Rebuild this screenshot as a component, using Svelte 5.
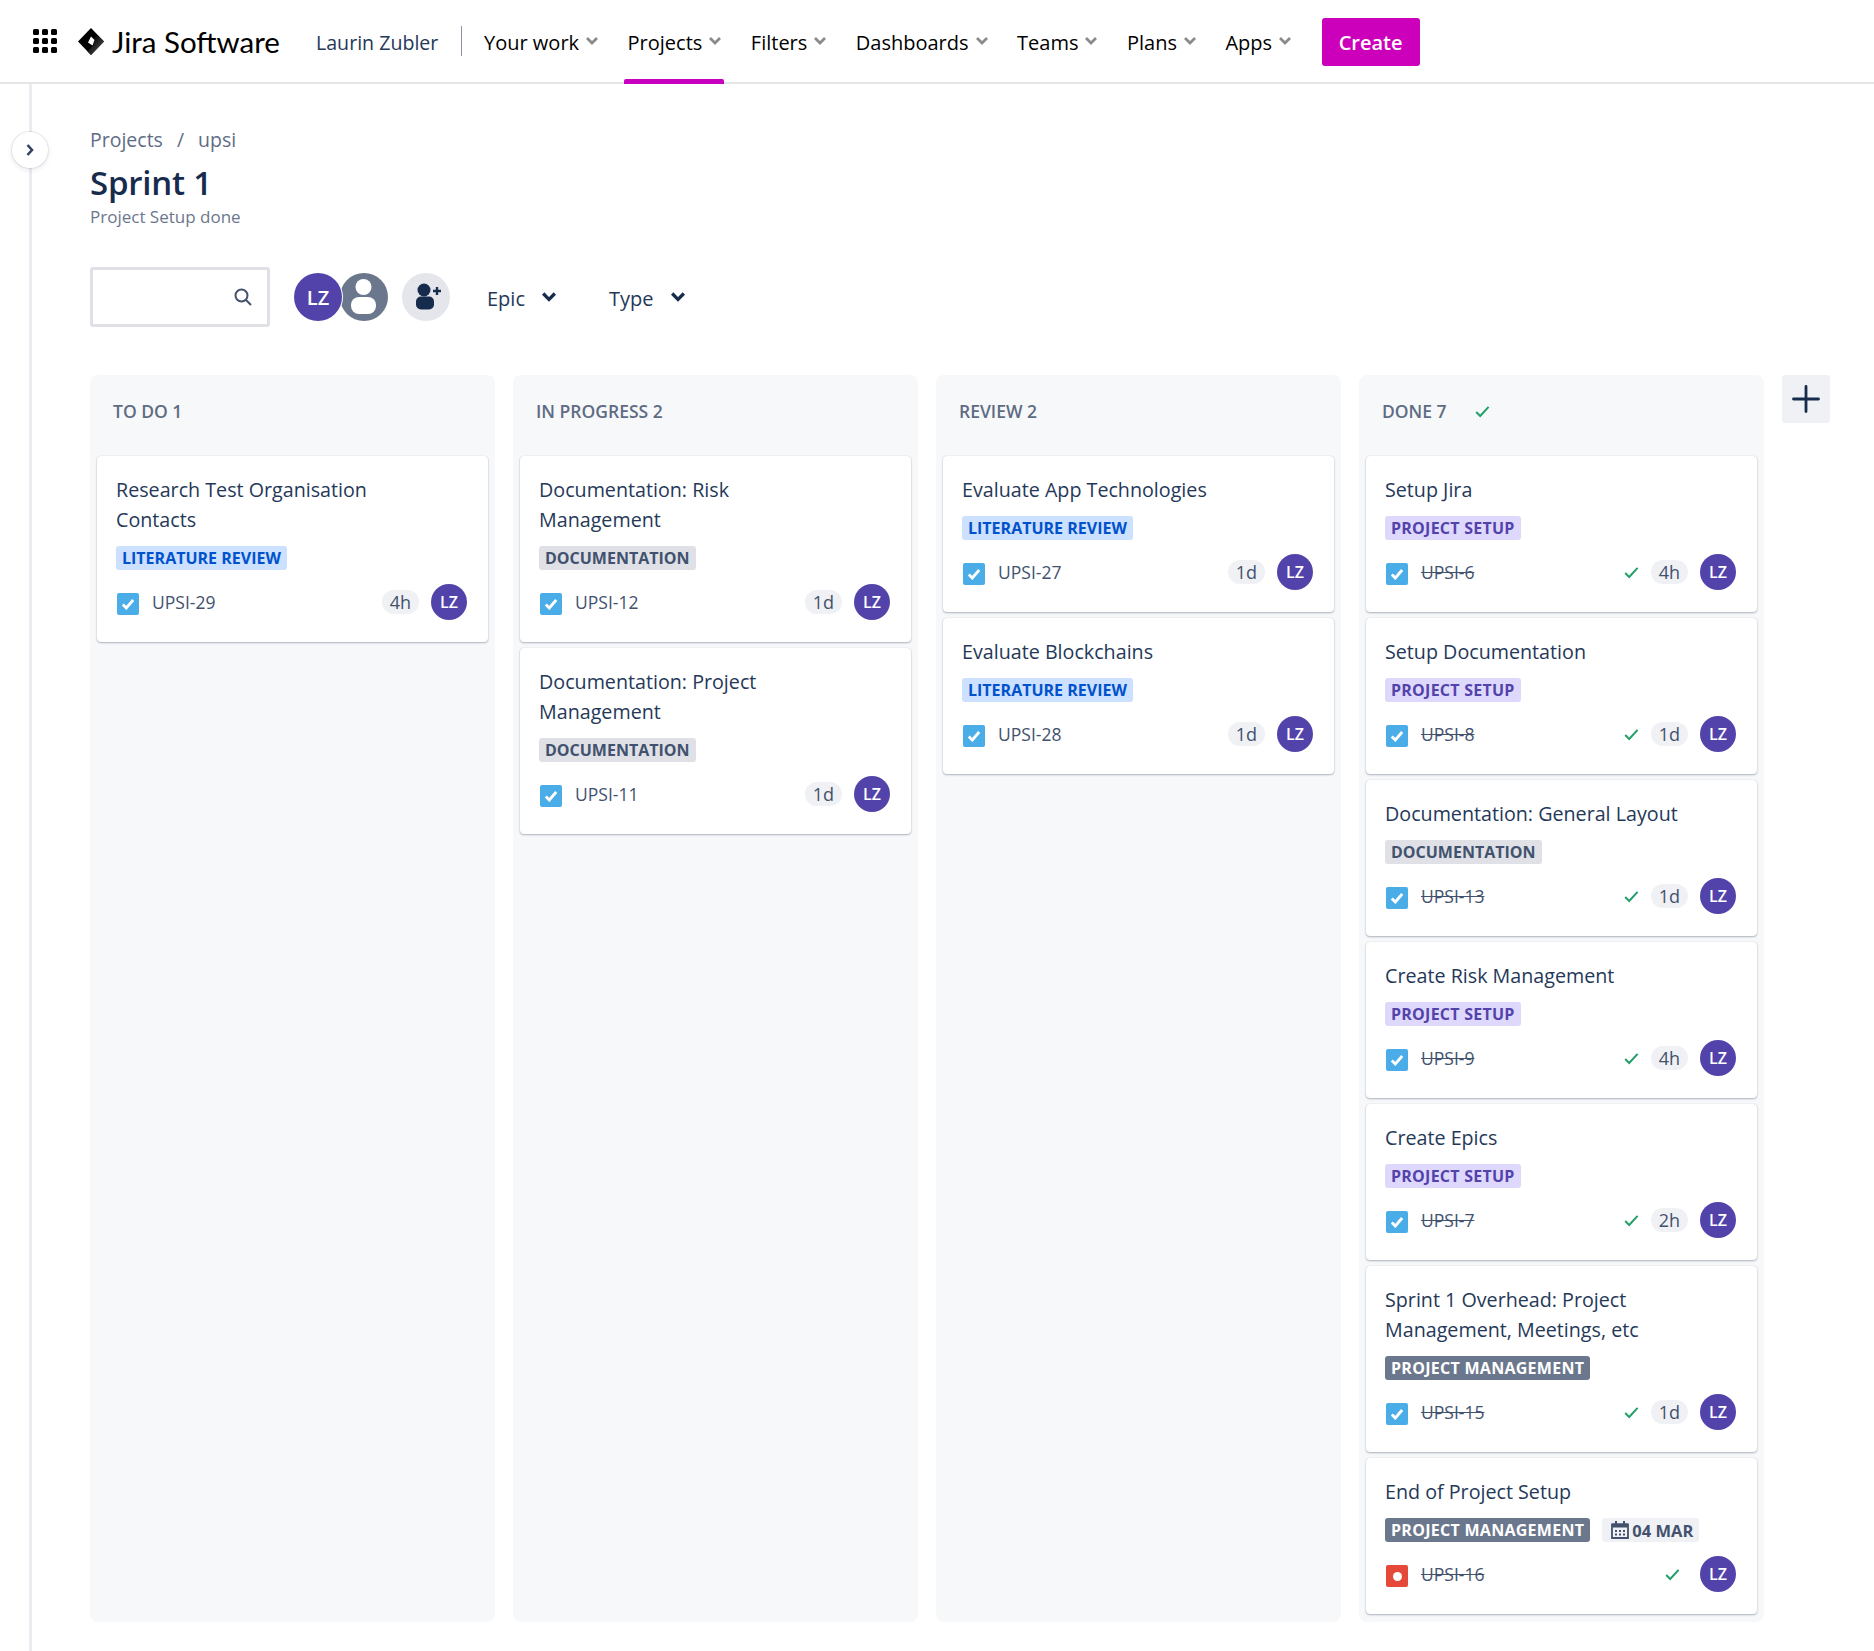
<script lang="ts">
	const navItems = ['Your work', 'Projects', 'Filters', 'Dashboards', 'Teams', 'Plans', 'Apps']

	const LIT = { label: 'LITERATURE REVIEW', kind: 'lit' }
	const DOC = { label: 'DOCUMENTATION', kind: 'doc' }
	const SETUP = { label: 'PROJECT SETUP', kind: 'setup' }
	const PM = { label: 'PROJECT MANAGEMENT', kind: 'pm' }

	const columns = [
		{
			name: 'TO DO 1',
			cards: [{ title: 'Research Test Organisation Contacts', tag: LIT, id: 'UPSI-29', est: '4h' }]
		},
		{
			name: 'IN PROGRESS 2',
			cards: [
				{ title: 'Documentation: Risk Management', tag: DOC, id: 'UPSI-12', est: '1d' },
				{ title: 'Documentation: Project Management', tag: DOC, id: 'UPSI-11', est: '1d' }
			]
		},
		{
			name: 'REVIEW 2',
			cards: [
				{ title: 'Evaluate App Technologies', tag: LIT, id: 'UPSI-27', est: '1d' },
				{ title: 'Evaluate Blockchains', tag: LIT, id: 'UPSI-28', est: '1d' }
			]
		},
		{
			name: 'DONE 7',
			done: true,
			cards: [
				{ title: 'Setup Jira', tag: SETUP, id: 'UPSI-6', est: '4h' },
				{ title: 'Setup Documentation', tag: SETUP, id: 'UPSI-8', est: '1d' },
				{ title: 'Documentation: General Layout', tag: DOC, id: 'UPSI-13', est: '1d' },
				{ title: 'Create Risk Management', tag: SETUP, id: 'UPSI-9', est: '4h' },
				{ title: 'Create Epics', tag: SETUP, id: 'UPSI-7', est: '2h' },
				{ title: 'Sprint 1 Overhead: Project Management, Meetings, etc', tag: PM, id: 'UPSI-15', est: '1d' },
				{ title: 'End of Project Setup', tag: PM, id: 'UPSI-16', date: '04 MAR', bug: true }
			]
		}
	]
</script>

{#snippet chevron()}
	<svg class="chev" width="12" height="12" viewBox="0 0 12 12"><path d="M1 3 6 8l5-5" fill="none" stroke="currentColor" stroke-width="2.800" /></svg>
{/snippet}

{#snippet tick(lone = false)}
	<svg class="tick" class:lone width="15" height="13" viewBox="0 0 15 13"><path d="M1.200 7 5.200 11 13.600 1.800" fill="none" stroke="#22a06b" stroke-width="2" /></svg>
{/snippet}

<header class="topbar">
	<svg class="apps" width="24" height="24" viewBox="0 0 24 24" fill="#000">
		{#each [0, 9, 18] as y}
			{#each [0, 9, 18] as x}
				<rect {x} {y} width="6" height="6" rx="1.500" />
			{/each}
		{/each}
	</svg>
	<div class="logo">
		<svg width="26" height="27" viewBox="0 0 26 27">
			<defs>
				<linearGradient id="fade" x1="0.200" y1="0.200" x2="0.900" y2="0.900">
					<stop offset="0" stop-color="#000" />
					<stop offset="1" stop-color="#555" />
				</linearGradient>
			</defs>
			<path d="M13 0 26 13.500 13 27 0 13.500Z" fill="#000" />
			<path d="M13 13.500 19.500 7 26 13.500 13 27 9.500 23.500 16.500 16Z" fill="url(#fade)" />
			<path d="M13 8.500 16.500 12 14.500 17.500 10 14.500Z" fill="#fff" />
		</svg>
		<span>Jira Software</span>
	</div>
	<span class="user">Laurin Zubler</span>
	<span class="divider"></span>
	<nav>
		{#each navItems as item}
			<div class="nav-item" class:active={item === 'Projects'}>
				<span>{item}</span>
				{@render chevron()}
			</div>
		{/each}
	</nav>
	<button class="create">Create</button>
</header>

<div class="page">
	<aside class="rail">
		<button class="expand" aria-label="Expand sidebar">
			<svg width="10" height="14" viewBox="0 0 10 14"><path d="M2.500 2 7 7l-4.500 5" fill="none" stroke="#344563" stroke-width="2.600" /></svg>
		</button>
	</aside>
	<main>
		<div class="crumbs"><span>Projects</span><span>/</span><span>upsi</span></div>
		<h1>Sprint 1</h1>
		<p class="subtitle">Project Setup done</p>

		<div class="filters">
			<div class="search">
				<svg width="20" height="20" viewBox="0 0 20 20"><circle cx="8.500" cy="8.500" r="6" fill="none" stroke="#42526e" stroke-width="2" /><path d="M13 13l5 5" stroke="#42526e" stroke-width="2" /></svg>
			</div>
			<div class="people">
				<span class="avatar big me">LZ</span>
				<span class="avatar big ghost">
					<svg width="48" height="48" viewBox="0 0 48 48" fill="#fff">
						<circle cx="23.500" cy="14" r="8" />
						<rect x="11" y="24" width="25" height="17" rx="8" />
					</svg>
				</span>
			</div>
			<span class="add-person">
				<svg width="48" height="48" viewBox="0 0 48 48" fill="#172b4d">
					<circle cx="22" cy="17" r="6.500" />
					<rect x="14" y="23.500" width="18" height="13" rx="5" />
					<path d="M35 14v8M31 18h8" stroke="#172b4d" stroke-width="2.400" />
				</svg>
			</span>
			<div class="filter epic"><span>Epic</span>{@render chevron()}</div>
			<div class="filter"><span>Type</span>{@render chevron()}</div>
		</div>

		<div class="board">
			{#each columns as col}
				<section class="column">
					<div class="col-head">
						<span>{col.name}</span>
						{#if col.done}{@render tick()}{/if}
					</div>
					{#each col.cards as card}
						<article class="card">
							<div class="card-title">{card.title}</div>
							<div class="meta">
								<span class="tag {card.tag.kind}">{card.tag.label}</span>
								{#if card.date}
									<span class="date">
										<svg width="18" height="18" viewBox="0 0 18 18"><path d="M1 3.500h16v13.500h-16z" fill="none" stroke="#42526e" stroke-width="1.800" /><path d="M1 2.500h16v4h-16zM4 0h2v3h-2zM12 0h2v3h-2z" fill="#42526e" /><path d="M4 9h2v2h-2zM8 9h2v2h-2zM12 9h2v2h-2zM4 12.500h2v2h-2zM8 12.500h2v2h-2zM12 12.500h2v2h-2z" fill="#42526e" /></svg>
										{card.date}
									</span>
								{/if}
							</div>
							<div class="foot">
								{#if card.bug}
									<span class="issue bug"><i></i></span>
								{:else}
									<span class="issue">
										<svg width="14" height="12" viewBox="0 0 14 12"><path d="M1.800 6.500 5.300 10 12.200 2" fill="none" stroke="#fff" stroke-width="2.800" /></svg>
									</span>
								{/if}
								<span class="key" class:struck={col.done}>{card.id}</span>
								{#if col.done}{@render tick(!card.est)}{/if}
								{#if card.est}<span class="est">{card.est}</span>{/if}
								<span class="avatar small">LZ</span>
							</div>
						</article>
					{/each}
				</section>
			{/each}
			<button class="add-col" aria-label="Add column">
				<svg width="28" height="28" viewBox="0 0 28 28"><path d="M14 1.500v25M1.500 14h25" stroke="#172b4d" stroke-width="2.800" stroke-linecap="round" /></svg>
			</button>
		</div>
	</main>
</div>

<style>
	:global(body) {
		margin: 0;
		background: #fff;
		font-family: 'Open Sans', 'Noto Sans', sans-serif;
		color: #172b4d;
	}

	.topbar {
		display: flex;
		align-items: center;
		height: 82px;
		padding-left: 33px;
		border-bottom: 2px solid #e4e5e7;
	}
	.apps { margin-right: 21px; }
	.logo {
		display: flex;
		align-items: center;
		gap: 8px;
		font-family: 'Lato', sans-serif;
		font-size: 29.500px;
		color: #000;
		width: 202px;
		white-space: nowrap;
	}
	.user {
		margin-left: 36px;
		padding-top: 3px;
		width: 145px;
		font-size: 19.600px;
		color: #253858;
		white-space: nowrap;
	}
	.divider {
		width: 1px;
		height: 30px;
		background: #8993a4;
		margin-right: 18px;
	}
	nav { display: flex; height: 100%; }
	.nav-item {
		display: flex;
		align-items: center;
		gap: 7px;
		height: 100%;
		box-sizing: border-box;
		padding: 2px 3px 0 4px;
		margin-right: 22.500px;
		font-size: 20px;
		color: #000;
		position: relative;
	}
	.nav-item .chev { color: #8a8a8a; margin-top: -3px; }
	.nav-item.active::after {
		content: '';
		position: absolute;
		left: 0;
		right: 0;
		bottom: -2px;
		height: 5px;
		background: #c800c0;
		border-radius: 2px 2px 0 0;
	}
	.create {
		margin: 2px 0 0 5px;
		width: 98px;
		height: 48px;
		border: 0;
		border-radius: 3px;
		background: #cc00bb;
		color: #fff;
		font: 600 20px 'Open Sans', sans-serif;
	}

	.page { display: flex; }
	.rail {
		position: relative;
		width: 29px;
		min-height: 1567px;
		border-right: 3px solid #ebecf0;
		flex: none;
	}
	.expand {
		position: absolute;
		left: 12px;
		top: 48px;
		width: 36px;
		height: 36px;
		padding: 0;
		display: flex;
		align-items: center;
		justify-content: center;
		border: 0;
		border-radius: 50%;
		background: #fff;
		box-shadow: 0 0 0 1px rgba(9, 30, 66, 0.08), 0 2px 4px 1px rgba(9, 30, 66, 0.08);
	}

	main { padding: 40px 0 0 58px; flex: 1; }
	.crumbs {
		display: flex;
		gap: 14px;
		font-size: 19.500px;
		line-height: 32px;
		color: #5e6c84;
	}
	h1 {
		margin: 5px 0 0;
		font-size: 33px;
		letter-spacing: -0.2px;
		line-height: 44px;
		font-weight: 600;
		color: #172b4d;
	}
	.subtitle {
		margin: 0;
		font-size: 17px;
		line-height: 24px;
		color: #6b778c;
	}

	.filters {
		display: flex;
		align-items: center;
		height: 60px;
		margin-top: 38px;
	}
	.search {
		width: 180px;
		height: 60px;
		box-sizing: border-box;
		border: 3px solid #dfe1e6;
		border-radius: 3px;
		display: flex;
		align-items: center;
		justify-content: flex-end;
		padding-right: 14px;
		margin-right: 24px;
	}
	.people { display: flex; margin-right: 14px; }
	.avatar {
		display: flex;
		align-items: center;
		justify-content: center;
		border-radius: 50%;
		background: #5243aa;
		color: #fff;
		font-weight: 600;
		flex: none;
	}
	.avatar.big { width: 48px; height: 48px; font-size: 20px; }
	.avatar.me {
		position: relative;
		z-index: 1;
		box-shadow: 0 0 0 1px #fff;
	}
	.avatar.ghost {
		background: #6b778c;
		margin-left: -2px;
		overflow: hidden;
	}
	.add-person {
		width: 48px;
		height: 48px;
		border-radius: 50%;
		background: #e4e6ec;
		display: flex;
		align-items: center;
		justify-content: center;
		margin-right: 37px;
	}
	.filter {
		display: flex;
		align-items: center;
		gap: 17px;
		padding-top: 2px;
		font-size: 20px;
		color: #253858;
	}
	.filter .chev { width: 14px; height: 14px; color: #172b4d; margin-top: -2px; }
	.filter.epic { margin-right: 53px; }

	.board {
		display: flex;
		align-items: stretch;
		gap: 18px;
		margin-top: 48px;
	}
	.column {
		width: 405px;
		box-sizing: border-box;
		padding: 0 7px 8px;
		background: #f7f8f9;
		border-radius: 8px;
		display: flex;
		flex-direction: column;
		gap: 6px;
	}
	.col-head {
		display: flex;
		align-items: center;
		gap: 28px;
		height: 75px;
		box-sizing: border-box;
		padding: 0 16px 3px;
		font-size: 17.500px;
		font-weight: 600;
		color: #5e6c84;
	}
	.card {
		background: #fff;
		border-radius: 4px;
		padding: 19px 21px 22px 19px;
		box-shadow: 0 1px 2px rgba(9, 30, 66, 0.3), 0 0 1px rgba(9, 30, 66, 0.2);
	}
	.card-title {
		font-size: 19.700px;
		line-height: 30px;
		color: #253858;
		padding-right: 40px;
	}
	.meta {
		display: flex;
		align-items: center;
		gap: 12px;
		margin-top: 11px;
		height: 24px;
	}
	.tag {
		height: 24px;
		line-height: 24px;
		padding: 0 6px;
		border-radius: 3px;
		font-size: 16px;
		font-weight: 700;
		white-space: nowrap;
	}
	.tag.lit { background: #cce0ff; color: #0052cc; }
	.tag.doc { background: #dfe1e6; color: #42526e; }
	.tag.setup { background: #dfd8fd; color: #5243aa; letter-spacing: 0.25px; }
	.tag.pm { background: #6b778c; color: #fff; letter-spacing: 0.28px; }
	.date {
		display: flex;
		align-items: center;
		gap: 3px;
		height: 24px;
		padding: 0 6px 0 9px;
		border-radius: 3px;
		background: #f0f1f4;
		color: #42526e;
		font-size: 16.500px;
		font-weight: 700;
	}
	.foot {
		display: flex;
		align-items: center;
		margin-top: 14px;
		height: 36px;
	}
	.issue {
		width: 22px;
		height: 22px;
		margin: 4px 0 0 1px;
		border-radius: 2px;
		background: #4bade8;
		display: flex;
		align-items: center;
		justify-content: center;
		flex: none;
	}
	.issue.bug { background: #e5493a; }
	.issue.bug i {
		width: 9px;
		height: 9px;
		border-radius: 50%;
		background: #fff;
	}
	.key {
		margin-left: 13px;
		margin-right: auto;
		font-size: 17.500px;
		font-weight: 500;
		color: #42526e;
	}
	.key.struck { text-decoration: line-through; }
	.tick { margin-right: 12px; }
	.tick.lone { margin-right: 20px; }
	.col-head .tick { margin: 0; }
	.est {
		height: 24px;
		line-height: 24px;
		padding: 0 8px;
		border-radius: 12px;
		background: #f0f1f4;
		color: #42526e;
		font-size: 18px;
		margin-right: 12px;
	}
	.avatar.small { width: 36px; height: 36px; font-size: 16px; }

	.add-col {
		width: 48px;
		height: 48px;
		padding: 0;
		border: 0;
		border-radius: 3px;
		background: #f0f1f4;
		display: flex;
		align-items: center;
		justify-content: center;
		flex: none;
	}
</style>
